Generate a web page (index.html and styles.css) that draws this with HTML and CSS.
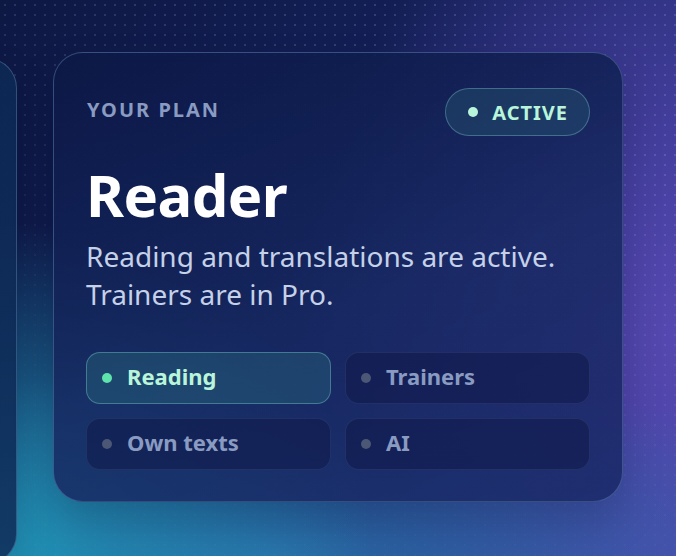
FILE: index.html
```html
<!DOCTYPE html>
<html lang="en">
  <head>
    <meta charset="UTF-8" />
    <meta name="viewport" content="width=device-width, initial-scale=1.0" />
    <title>Your Plan</title>
    <link rel="stylesheet" href="styles.css">
  </head>
  <body>
    <div class="dots"></div>
    <div class="track">
      <!-- Previous card, peeking in from the left -->
      <div class="plan-card plan-card-prev"></div>

      <!-- Current plan -->
      <section class="plan-card">
        <div class="plan-top">
          <span class="plan-label">YOUR PLAN</span>
          <span class="status-badge"><span class="status-dot"></span>ACTIVE</span>
        </div>
        <h1 class="plan-name">Reader</h1>
        <p class="plan-desc">Reading and translations are active.<br>Trainers are in Pro.</p>
        <div class="feature-grid">
          <div class="feature feature-on"><span class="feature-dot"></span>Reading</div>
          <div class="feature"><span class="feature-dot"></span>Trainers</div>
          <div class="feature"><span class="feature-dot"></span>Own texts</div>
          <div class="feature"><span class="feature-dot"></span>AI</div>
        </div>
      </section>
    </div>
  </body>
</html>
```

FILE: styles.css
```css
* {
  margin: 0;
  padding: 0;
  box-sizing: border-box;
  font-family: "Noto Sans", sans-serif;
}

:root {
  --mint: #b9f5da;
  --mint-dot: #5fe3ad;
  --muted: #8a9bc2;
  --text: #c5d1e8;
}

body {
  width: 676px;
  height: 556px;
  overflow: hidden;
  position: relative;
  background:
    radial-gradient(ellipse 55% 60% at 0% 100%, #2196b8 0%, rgba(33, 150, 184, 0) 100%),
    radial-gradient(ellipse 90% 35% at 40% 100%, #2a6aa6 0%, rgba(42, 106, 166, 0) 100%),
    radial-gradient(ellipse 55% 90% at 100% 60%, #5548b0 0%, rgba(85, 72, 176, 0) 100%),
    linear-gradient(125deg, #0d1843 0%, #131f55 40%, #2a3182 75%, #4a44a8 100%);
  color: var(--text);
}

/* faint dot grid over the background */
.dots {
  position: absolute;
  inset: 0;
  background-image: radial-gradient(rgba(180, 190, 255, 0.2) 0.8px, transparent 1.2px);
  background-size: 10px 10px;
  -webkit-mask-image: linear-gradient(200deg, #000 20%, rgba(0, 0, 0, 0.2) 70%);
  mask-image: linear-gradient(200deg, #000 20%, rgba(0, 0, 0, 0.2) 70%);
}

.track {
  position: relative;
  display: flex;
  align-items: flex-start;
  gap: 36px;
  padding-top: 52px;
  margin-left: -553px;
}

.plan-card {
  flex: none;
  width: 570px;
  height: 450px;
  padding: 34px 32px 33px 32px;
  border-radius: 30px;
  border: 1.5px solid rgba(120, 160, 200, 0.35);
  background: linear-gradient(160deg, rgba(12, 24, 70, 0.93) 0%, rgba(22, 40, 96, 0.85) 55%, rgba(24, 38, 100, 0.82) 100%);
  box-shadow: 0 20px 40px rgba(5, 10, 40, 0.2);
}

.plan-card-prev {
  height: 506px;
  margin-top: 6px;
  background: linear-gradient(180deg, rgba(14, 40, 84, 0.95), rgba(16, 48, 92, 0.9));
}

.plan-top {
  display: flex;
  justify-content: space-between;
  align-items: center;
  height: 48px;
  margin-top: 1px;
}

.plan-label {
  font-size: 20px;
  font-weight: 700;
  letter-spacing: 0.1em;
  color: var(--muted);
  margin-left: 1px;
  margin-top: -6px;
}

.status-badge {
  display: flex;
  align-items: center;
  gap: 14px;
  height: 48px;
  padding: 0 21px 0 22px;
  border-radius: 24px;
  border: 1.5px solid rgba(120, 190, 200, 0.4);
  background: rgba(40, 92, 112, 0.38);
  font-size: 20px;
  font-weight: 700;
  letter-spacing: 0.05em;
  color: var(--mint);
}

.status-dot {
  width: 10px;
  height: 10px;
  border-radius: 50%;
  background: var(--mint);
}

.plan-name {
  font-size: 58px;
  font-weight: 700;
  line-height: 1;
  color: #ffffff;
  margin-top: 30px;
  letter-spacing: -0.01em;
}

.plan-desc {
  font-size: 28px;
  line-height: 38px;
  color: var(--text);
  margin-top: 13px;
}

.feature-grid {
  display: grid;
  grid-template-columns: 1fr 1fr;
  gap: 14px;
  margin-top: 39px;
}

.feature {
  display: flex;
  align-items: center;
  gap: 15px;
  height: 52px;
  padding: 0 0 4px 15px;
  border-radius: 14px;
  border: 1.5px solid rgba(120, 150, 200, 0.14);
  background: rgba(14, 22, 70, 0.5);
  font-size: 22px;
  font-weight: 700;
  color: var(--muted);
}

.feature-dot {
  width: 10px;
  height: 10px;
  margin-top: 4px;
  border-radius: 50%;
  background: #4c5675;
}

.feature-on {
  border-color: rgba(110, 190, 190, 0.45);
  background: rgba(40, 104, 124, 0.42);
  color: var(--mint);
}

.feature-on .feature-dot {
  background: var(--mint-dot);
}
```
